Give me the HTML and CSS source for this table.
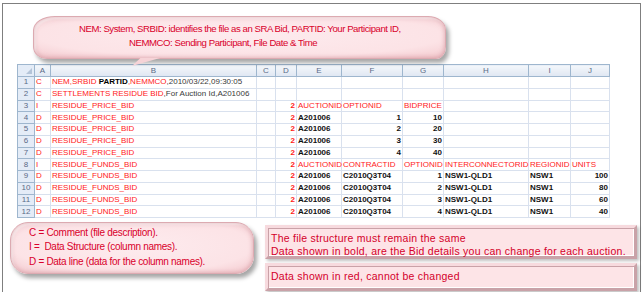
FILE: index.html
```html
<!DOCTYPE html>
<html>
<head>
<meta charset="utf-8">
<link rel="stylesheet" href="styles.css">
</head>
<body>
<div class="frame">
  <div class="callout top-callout">
    <p class="l1">NEM: System, SRBID: identifies the file as an SRA Bid, PARTID: Your Participant ID,</p>
    <p class="l2">NEMMCO: Sending Participant, File Date &amp; Time</p>
  </div>

  <table class="sheet">
    <colgroup>
      <col class="c-rn"><col class="c-a"><col class="c-b"><col class="c-c"><col class="c-d"><col class="c-e"><col class="c-f"><col class="c-g"><col class="c-h"><col class="c-i"><col class="c-j">
    </colgroup>
    <tr class="hdr">
      <th class="corner"><span class="tri"></span></th><th>A</th><th>B</th><th>C</th><th>D</th><th>E</th><th>F</th><th>G</th><th>H</th><th>I</th><th>J</th>
    </tr>
    <tr><th>1</th><td class="r">C</td><td class="ov"><span class="r">NEM,SRBID</span> <b class="k">PARTID</b><span class="r">,NEMMCO</span><span class="g">,2010/03/22,09:30:05</span></td><td></td><td></td><td></td><td></td><td></td><td></td><td></td><td></td></tr>
    <tr><th>2</th><td class="r">C</td><td class="ov"><span class="r">SETTLEMENTS RESIDUE BID</span><span class="g">,For Auction Id,A201006</span></td><td></td><td></td><td></td><td></td><td></td><td></td><td></td><td></td></tr>
    <tr><th>3</th><td class="r">I</td><td class="r">RESIDUE_PRICE_BID</td><td></td><td class="r n b">2</td><td class="r">AUCTIONID</td><td class="r">OPTIONID</td><td class="r">BIDPRICE</td><td></td><td></td><td></td></tr>
    <tr><th>4</th><td class="r">D</td><td class="r">RESIDUE_PRICE_BID</td><td></td><td class="r n b">2</td><td class="b">A201006</td><td class="b n">1</td><td class="b n">10</td><td></td><td></td><td></td></tr>
    <tr><th>5</th><td class="r">D</td><td class="r">RESIDUE_PRICE_BID</td><td></td><td class="r n b">2</td><td class="b">A201006</td><td class="b n">2</td><td class="b n">20</td><td></td><td></td><td></td></tr>
    <tr><th>6</th><td class="r">D</td><td class="r">RESIDUE_PRICE_BID</td><td></td><td class="r n b">2</td><td class="b">A201006</td><td class="b n">3</td><td class="b n">30</td><td></td><td></td><td></td></tr>
    <tr><th>7</th><td class="r">D</td><td class="r">RESIDUE_PRICE_BID</td><td></td><td class="r n b">2</td><td class="b">A201006</td><td class="b n">4</td><td class="b n">40</td><td></td><td></td><td></td></tr>
    <tr><th>8</th><td class="r">I</td><td class="r">RESIDUE_FUNDS_BID</td><td></td><td class="r n b">2</td><td class="r">AUCTIONID</td><td class="r">CONTRACTID</td><td class="r">OPTIONID</td><td class="r">INTERCONNECTORID</td><td class="r">REGIONID</td><td class="r">UNITS</td></tr>
    <tr><th>9</th><td class="r">D</td><td class="r">RESIDUE_FUNDS_BID</td><td></td><td class="r n b">2</td><td class="b">A201006</td><td class="b">C2010Q3T04</td><td class="b n">1</td><td class="b">NSW1-QLD1</td><td class="b">NSW1</td><td class="b n">100</td></tr>
    <tr><th>10</th><td class="r">D</td><td class="r">RESIDUE_FUNDS_BID</td><td></td><td class="r n b">2</td><td class="b">A201006</td><td class="b">C2010Q3T04</td><td class="b n">2</td><td class="b">NSW1-QLD1</td><td class="b">NSW1</td><td class="b n">80</td></tr>
    <tr><th>11</th><td class="r">D</td><td class="r">RESIDUE_FUNDS_BID</td><td></td><td class="r n b">2</td><td class="b">A201006</td><td class="b">C2010Q3T04</td><td class="b n">3</td><td class="b">NSW1-QLD1</td><td class="b">NSW1</td><td class="b n">60</td></tr>
    <tr><th>12</th><td class="r">D</td><td class="r">RESIDUE_FUNDS_BID</td><td></td><td class="r n b">2</td><td class="b">A201006</td><td class="b">C2010Q3T04</td><td class="b n">4</td><td class="b">NSW1-QLD1</td><td class="b">NSW1</td><td class="b n">40</td></tr>
  </table>

  <div class="bottom">
    <div class="callout legend">
      <p>C = Comment (file description).</p>
      <p>I =&nbsp; Data Structure (column names).</p>
      <p>D = Data line (data for the column names).</p>
    </div>
    <div class="notes">
      <div class="note n1">
        <p>The file structure must remain the same</p>
        <p>Data shown in bold, are the Bid details you can change for each auction.</p>
      </div>
      <div class="note n2">
        <p>Data shown in red, cannot be changed</p>
      </div>
    </div>
  </div>
</div>
</body>
</html>
```

FILE: styles.css
```css
html, body {
  margin: 0;
  padding: 0;
  background: #ffffff;
}
body {
  font-family: "Liberation Sans", Arial, sans-serif;
}
p { margin: 0; }

.frame {
  margin: 3px 0 0 2px;
  width: 637px;
  height: 300px;
  border: 1px solid #7f7f7f;
  border-bottom: none;
  position: relative;
}

.callout {
  position: relative;
  background: radial-gradient(ellipse at 50% 45%, #fdebee 0%, #fce3e6 70%, #f3c9ce 100%);
  border: 1px solid #dcaab1;
  box-shadow: 3px 4px 4px rgba(0, 0, 0, 0.35), inset 0 0 5px rgba(190, 110, 120, 0.55), inset 2px 2px 2px rgba(255,255,255,0.8);
  color: #d9002b;
}

.top-callout {
  margin: 12px 0 0 30px;
  width: 413px;
  height: 43px;
  border-radius: 22px 18px 10px 14px / 14px 14px 12px 12px;
  font-size: 9.6px;
  letter-spacing: -0.45px;
  line-height: 14px;
  box-sizing: border-box;
  padding-top: 5px;
}
.top-callout .l1 { padding-left: 45px; }
.top-callout .l2 { padding-left: 95px; }
.top-callout::after {
  content: "";
  position: absolute;
  left: 98px;
  top: 41px;
  width: 28px;
  height: 8px;
  background: #f6d3d7;
  clip-path: polygon(30% 0, 100% 0, 0 100%);
}

.sheet {
  margin: 5px 0 0 14px;
  border-collapse: collapse;
  table-layout: fixed;
  width: 592px;
  font-size: 8px;
  border: 1px solid #9eb6ce;
}
.c-rn { width: 17px; }
.c-a { width: 16px; }
.c-b { width: 206px; }
.c-c { width: 19px; }
.c-d { width: 21px; }
.c-e { width: 45px; }
.c-f { width: 61px; }
.c-g { width: 41px; }
.c-h { width: 85px; }
.c-i { width: 42px; }
.c-j { width: 39px; }

.sheet tr { height: 11.75px; }
.sheet tr.hdr { height: 12px; }
.sheet th {
  font-weight: normal;
  color: #5a6a86;
  background: linear-gradient(#f4f7fb, #dfe7f2);
  border: 1px solid #9eb6ce;
  padding: 0;
  text-align: center;
  font-size: 8px;
  line-height: 10px;
}
.sheet tr:not(.hdr) th {
  background: #e4ecf7;
  border-color: #9eb6ce;
}
.sheet th.corner {
  position: relative;
  background: #e4ecf7;
}
.tri {
  position: absolute;
  right: 2px;
  bottom: 2px;
  width: 0;
  height: 0;
  border-left: 6px solid transparent;
  border-bottom: 6px solid #b4c4d8;
}
.sheet td {
  border: 1px solid #d9e1ee;
  padding: 0 1px 0 1px;
  white-space: nowrap;
  line-height: 10px;
  overflow: visible;
  color: #111;
}
.r { color: #ff1a1a; }
.sheet td.r { color: #ff1a1a; }
.g { color: #3a3a3a; }
.k { color: #000; font-weight: bold; }
.b { font-weight: bold; }
.n { text-align: right; }

.bottom {
  display: flex;
  align-items: flex-start;
  margin-top: 4px;
}
.legend {
  margin-left: 7px;
  width: 244px;
  height: 52px;
  box-sizing: border-box;
  border-radius: 18px;
  font-size: 10px;
  letter-spacing: -0.3px;
  line-height: 14.3px;
  padding: 3px 0 0 18px;
}
.notes {
  margin-left: 11px;
  margin-top: 3px;
  width: 372px;
  display: flex;
  flex-direction: column;
  gap: 4px;
}
.note {
  background: #fde4e7;
  border: 3px solid;
  border-color: #f7dade #c9a2a8 #c9a2a8 #f7dade;
  box-shadow: inset 1px 1px 0 #c9a2a8, inset -1px -1px 0 #fff, 2px 2px 3px rgba(0,0,0,0.25);
  color: #d4002a;
  font-size: 10.5px;
  letter-spacing: 0.25px;
  line-height: 13px;
  padding: 4px 2px 0 3px;
  box-sizing: border-box;
  white-space: nowrap;
}
.n1 { height: 34px; }
.n2 { height: 28px; }
```
